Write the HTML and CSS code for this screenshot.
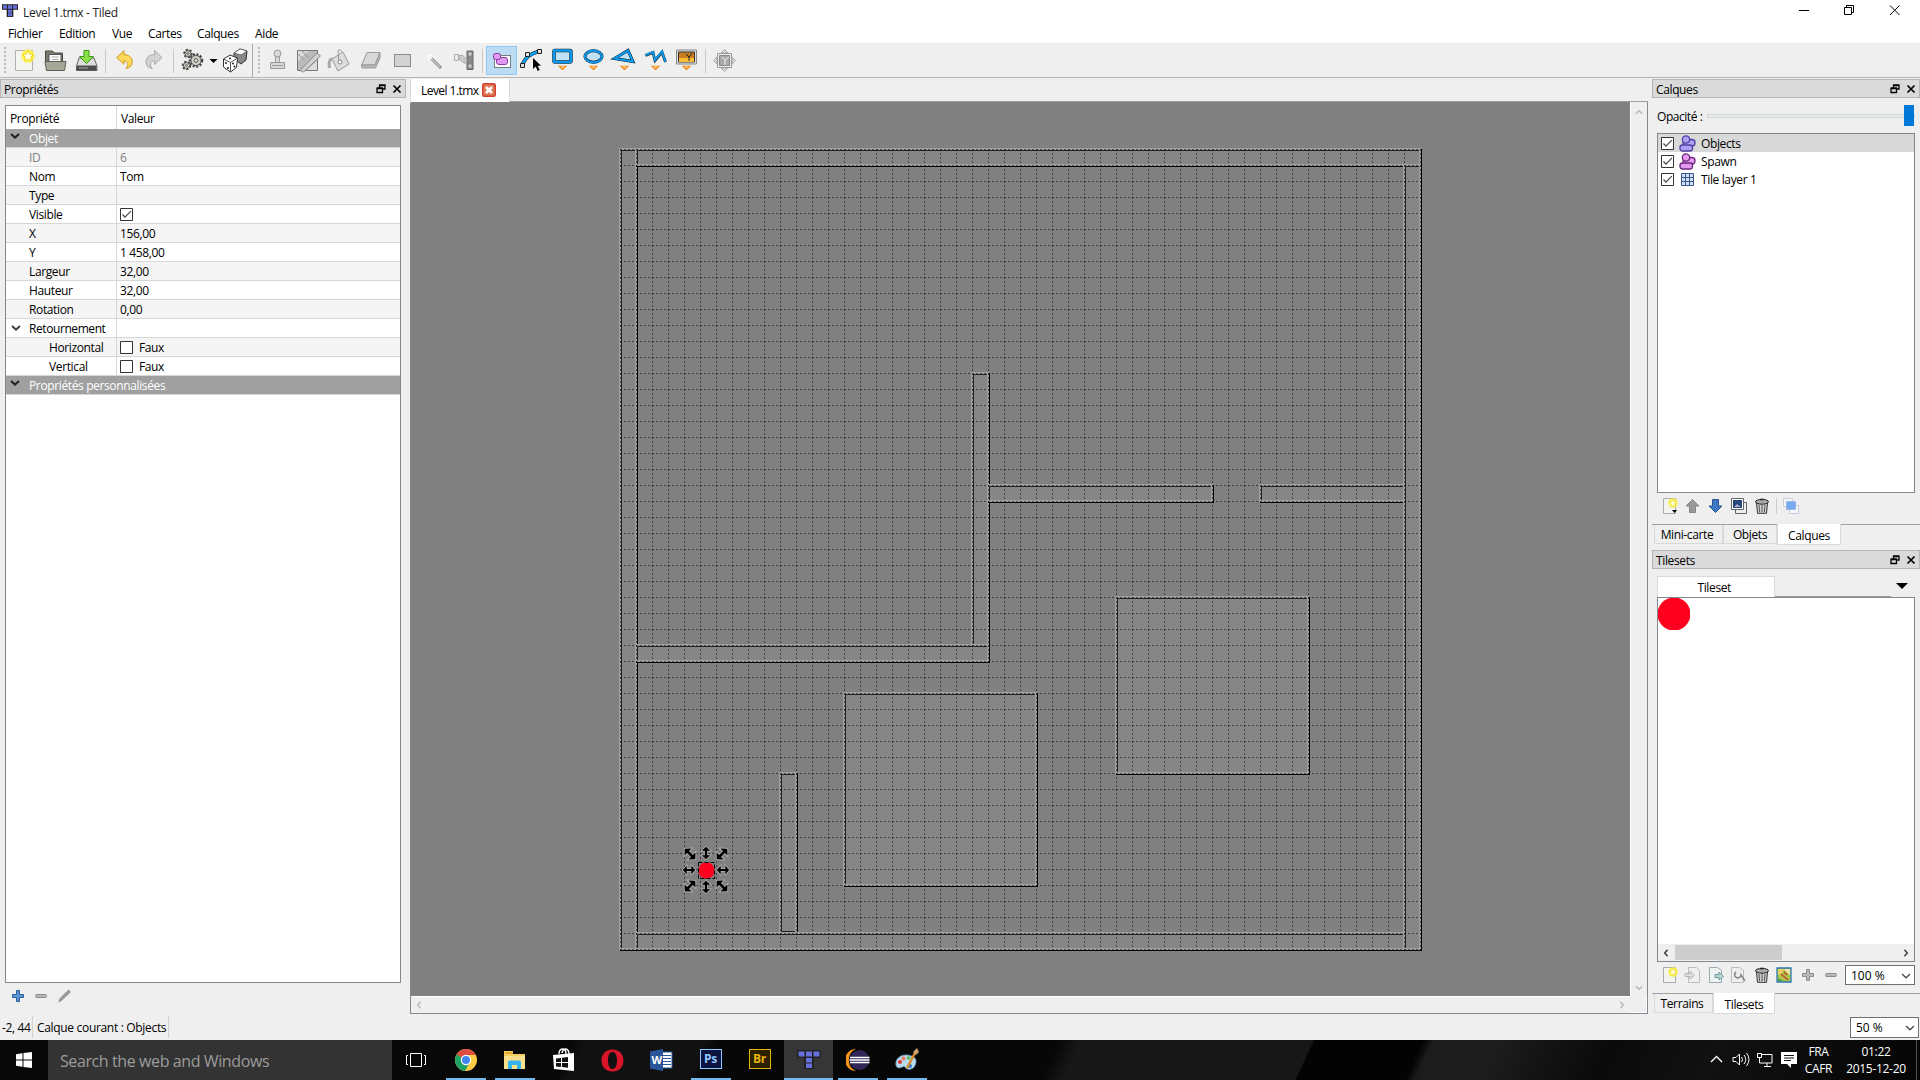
FILE: index.html
```html
<!DOCTYPE html>
<html lang="fr">
<head>
<meta charset="utf-8">
<title>Level 1.tmx - Tiled</title>
<link rel="stylesheet" href="styles.css">
</head>
<body>
<svg width="0" height="0" class="defs" aria-hidden="true">
  <defs>
    <symbol id="float" viewBox="0 0 10 10"><path d="M3.5 5V1.5H9V5H6.5M3 1H9.5M1 4.5H6.5V8.5H1ZM.5 4H7" fill="none" stroke="#000" stroke-width="1.3"/></symbol>
    <symbol id="close" viewBox="0 0 10 10"><path d="M1.5 1.5L8.5 8.5M8.5 1.5L1.5 8.5" stroke="#000" stroke-width="1.7"/></symbol>
    <symbol id="tick" viewBox="0 0 13 13"><path d="M.5.5h12v12H.5z" fill="#fff" stroke="#333"/><path d="M2.5 6.5L5 9.2L10.8 3.2" fill="none" stroke="#444" stroke-width="1.2"/></symbol>
    <symbol id="box" viewBox="0 0 13 13"><path d="M.5.5h12v12H.5z" fill="#fff" stroke="#333"/></symbol>
    <symbol id="chev" viewBox="0 0 10 6"><path d="M1 1L5 4.6L9 1" fill="none" stroke="currentColor" stroke-width="2"/></symbol>
    <symbol id="chevthin" viewBox="0 0 10 6"><path d="M1 1L5 4.8L9 1" fill="none" stroke="#444" stroke-width="1.2"/></symbol>
    <symbol id="tiled" viewBox="0 0 24 20"><path d="M0 0h24v8h-7v11H7V8H0z" fill="#222"/><path d="M1.5 1.5h6v5h-6zM9 1.5h6v5H9zM16.5 1.5h6v5h-6zM9 8h6v4.500H9zM9 13.500h6V18H9z" fill="#6670dc"/></symbol>
    <symbol id="blobs" viewBox="0 0 17 17"><g fill="currentColor" stroke="var(--edge)" stroke-width="1.3"><rect x="4" y="4.500" width="12" height="6.500" rx="3"/><rect x="1" y="10" width="12.500" height="6" rx="2.500"/><circle cx="7" cy="4.500" r="3.700"/></g></symbol>
    <symbol id="star" viewBox="0 0 12 12"><circle cx="6" cy="6" r="5.800" fill="#fff23a" opacity=".8"/><path d="M6 1.500L7.500 4.300L10.500 4.800L8.400 7L8.800 10.200L6 8.900L3.200 10.200L3.600 7L1.500 4.800L4.500 4.300Z" fill="#fffde0" stroke="#e8d400" stroke-width=".7"/></symbol>
    <symbol id="new" viewBox="0 0 16 16"><path d="M1.500.5h12v15h-12z" fill="#f3f3ef" stroke="#aaa"/><use href="#star" x="6" y="0" width="10" height="10"/></symbol>
    <symbol id="trash" viewBox="0 0 16 16"><path d="M2.500 5h11L12.500 15.300h-9z" fill="#d0d0d0" stroke="#333"/><path d="M5 7l.6 7M8 7v7M11 7l-.6 7" stroke="#555"/><ellipse cx="8" cy="3.800" rx="6.500" ry="2.400" fill="#aaa" stroke="#222"/><path d="M6 1.500h4" stroke="#222" stroke-width="1.500"/></symbol>
    <symbol id="drop" viewBox="0 0 10 5"><path d="M0 0H10L5 5Z" fill="#f28a1e"/><path d="M3 1H7L5 3Z" fill="#ffe0a0"/></symbol>
    <symbol id="plus" viewBox="0 0 12 12"><path d="M4.500.5h3v4h4v3h-4v4h-3v-4h-4v-3h4z" fill="currentColor" stroke="var(--edge)"/></symbol>
    <symbol id="minus" viewBox="0 0 12 12"><rect x=".5" y="4.500" width="11" height="3" rx="1" fill="#b8b8b8" stroke="#8e8e8e"/></symbol>
    <symbol id="resize" viewBox="-7 -7 14 14"><path d="M-6.200 0L-2.300 -4.200V-1.100H2.300V-4.200L6.200 0L2.300 4.200V1.100H-2.300V4.200Z" fill="#000" stroke="#b4b4b4" stroke-width="1.400" paint-order="stroke"/></symbol>
    <pattern id="gridH" x="620" y="149" width="4" height="16" patternUnits="userSpaceOnUse"><path d="M0 0h2v1H0z" fill="#000" fill-opacity=".5"/></pattern>
    <pattern id="gridV" x="620" y="149" width="16" height="4" patternUnits="userSpaceOnUse"><path d="M0 0h1v2H0z" fill="#000" fill-opacity=".5"/></pattern>
  </defs>
</svg>

<div class="app">
  <header class="titlebar">
    <svg class="logo" width="16" height="14"><use href="#tiled"/></svg>
    <span class="title">Level 1.tmx - Tiled</span>
    <svg class="winbtns" width="120" height="20" fill="none" stroke="#000"><path d="M2 10.500h10M47.500 7.500h7v7h-7zM49.500 7V5.500h7v7H55M93 5.500l9.500 9.500M102.500 5.500L93 15"/></svg>
  </header>
  <nav class="menubar"><span class="m1">Fichier</span><span class="m2">Edition</span><span class="m3">Vue</span><span class="m4">Cartes</span><span class="m5">Calques</span><span class="m6">Aide</span></nav>

  <div class="toolbar">
    <i class="grip"></i>
    <svg class="t31" viewBox="0 0 31 31"><path d="M6.500 5.500h17v20h-17z" fill="#f4f4f0" stroke="#b2b2a8"/><use href="#star" x="12" y="4" width="14" height="14"/></svg>
    <svg class="t32 pull" viewBox="0 0 31 31"><path d="M6 20V6h7l2 2h8v12z" fill="#777b70" stroke="#4a4d45"/><path d="M9.500 9.500h12V19h-12z" fill="#fff" stroke="#555"/><path d="M12 12h7M12 14.500h7" stroke="#aaa"/><path d="M5.500 16.500h21l-1.500 9h-18z" fill="#a4a896" stroke="#5d6155"/></svg>
    <svg class="t31" viewBox="0 0 31 31"><path d="M8 13h15l3 8v4.500H5.500V21z" fill="#ddd" stroke="#666"/><path d="M5.500 20.500h20v5h-20z" fill="#4b4e4d"/><path d="M8 23h9" stroke="#aaa"/><path d="M13 5.500h5v6h4.500L15.500 18.500L8.500 11.500H13z" fill="#8be04a" stroke="#3d9a13"/></svg>
    <i class="sep s1"></i>
    <svg class="t30" viewBox="0 0 31 31"><path d="M7 12.500L14.500 5.500V9.500C21 9.500 24 14 22.500 19.500C21.800 22 19 23.500 16.500 23.500C20 20.500 18.500 16 14.500 15.500V19.500Z" fill="#ffd95a" stroke="#c99310"/></svg>
    <svg class="t28" viewBox="0 0 28 31"><path d="M22 12.500L14.500 5.500V9.500C8 9.500 5 14 6.500 19.500C7.200 22 10 23.500 12.500 23.500C9 20.500 10.500 16 14.500 15.500V19.500Z" fill="#d2d2d2" stroke="#aaa"/></svg>
    <i class="sep s2"></i>
    <svg class="t31" viewBox="0 0 31 31" fill="#d4d4cd" stroke="#444"><g stroke-dasharray="2 1.500" stroke-width="2.500"><circle cx="20" cy="15.500" r="6"/><circle cx="12" cy="8.500" r="3.500"/><circle cx="10.500" cy="20.500" r="3.500"/></g><g stroke-width=".8"><circle cx="20" cy="15.500" r="5"/><circle cx="20" cy="15.500" r="2"/><circle cx="12" cy="8.500" r="3"/><circle cx="12" cy="8.500" r="1"/><circle cx="10.500" cy="20.500" r="3"/><circle cx="10.500" cy="20.500" r="1"/></g></svg>
    <svg class="t12" viewBox="0 0 12 31"><path d="M2.500 14h8l-4 4z"/></svg>
    <svg class="t32" viewBox="0 0 32 31"><path d="M15 8L21 4L28 6L27 15L22 19L15 14Z" fill="#888" stroke="#333"/><path d="M15 8L21 4L28 6L22 10Z" fill="#fff" stroke="#555" stroke-width=".7"/><path d="M4.500 14L11 10L18.500 13L17.500 22.500L11.500 27L4.500 22Z" fill="#fff" stroke="#333"/><path d="M4.500 14L11.500 17.500L18.500 13M11.500 17.500V27" fill="none" stroke="#555"/><g fill="#222"><circle cx="7" cy="18" r="1"/><circle cx="9" cy="23" r="1"/><circle cx="14" cy="18.500" r="1"/><circle cx="15.500" cy="21.500" r="1"/><circle cx="11" cy="13.500" r="1"/></g></svg>
    <i class="sep s3"></i><i class="grip g2"></i>
    <svg class="t31" viewBox="0 0 31 31"><g fill="#d8d8d8" stroke="#999"><path d="M8.500 17.500h14v6h-14zM13.500 11h4v6.500h-4z"/><circle cx="15.500" cy="8.500" r="3.500"/></g><path d="M10 20.500h11" stroke="#999"/></svg>
    <svg class="t31" viewBox="0 0 31 31"><path d="M4.500 5.500h20v20h-20z" fill="#bbb" stroke="#777"/><path d="M5 6h10L5 16zM24 16v9H14z" fill="#ddd"/><path d="M5 9L12 16M9 6L16 13" stroke="#aaa" stroke-width="1.500"/><path d="M7 25.500L24 8L27.500 11L10.500 27z" fill="#d2d2d2" stroke="#888"/></svg>
    <svg class="t31" viewBox="0 0 31 31"><path d="M8 14L19 7L25 19L14 26Z" fill="#ddd" stroke="#999"/><path d="M15 17L14 6Q16 3 18 7" fill="none" stroke="#999"/><circle cx="16" cy="17" r="2" fill="#fff" stroke="#888"/><path d="M9 14Q4 13 5.500 23" fill="none" stroke="#aaa" stroke-width="3"/></svg>
    <svg class="t31" viewBox="0 0 31 31"><path d="M12 7.500h13L20 20H6.500z" fill="#d8d8d8" stroke="#999" stroke-linejoin="round"/><path d="M6.500 20H20L25 8v5L20.500 23H7z" fill="#b8b8b8" stroke="#999" stroke-linejoin="round"/></svg>
    <svg class="t32" viewBox="0 0 32 31"><path d="M8.500 9.500h16v12h-16z" fill="#d2d2d2" stroke="#333" stroke-dasharray="1 1"/></svg>
    <svg class="t31 wand" viewBox="0 0 31 31"><path d="M11 12L22 23" stroke="#888" stroke-width="3"/><path d="M11 12L21 22" stroke="#ccc" stroke-width="1.200"/><circle cx="11" cy="12" r="2.500" fill="#fff" opacity=".8"/></svg>
    <svg class="t31" viewBox="0 0 31 31"><path d="M17 6h6v18.500h-6z" fill="#888" stroke="#666"/><path d="M18.500 7.500h3v3h-3zM18.500 19.500h3v3h-3z" fill="#ccc"/><path d="M4.500 9.500h4v6h-4z" fill="#eee" stroke="#aaa"/><path d="M9 10.500h4l4 5l-2 3L9 14z" fill="#ccc" stroke="#aaa"/></svg>
    <i class="sep s4"></i>
    <span class="active"><svg class="t31" viewBox="0 0 31 31"><path d="M8.500 10.500h16v12h-16z" fill="#fff" stroke="#111" stroke-dasharray="1 1"/><g fill="#e09af0" stroke="#8a3aa5"><rect x="10.500" y="12.500" width="11" height="7" rx="2.500"/><rect x="7.500" y="8.500" width="7" height="6" rx="2"/></g></svg></span>
    <svg class="t30" viewBox="0 0 30 31"><path d="M5.500 20Q8 10 23 6" fill="none" stroke="#111" stroke-width="3.500"/><path d="M5.500 20Q8 10 23 6" fill="none" stroke="#109df0" stroke-width="2.500"/><path d="M3.500 18.500h4v4h-4zM8.500 7.500h4v4h-4zM20.500 4.500h4v4h-4z" fill="#ddd" stroke="#222"/><path d="M16 13v11l2.700-2.400l2 4.400l2-1l-2-4.200H24z"/></svg>
    <svg class="t31" viewBox="0 0 31 31"><rect x="7" y="5.500" width="17" height="11.500" rx="1" fill="#bfe2f5" stroke="#222" stroke-width="3.500"/><rect x="7" y="5.500" width="17" height="11.500" rx="1" fill="none" stroke="#0a9af2" stroke-width="2.600"/><use href="#drop" x="10.500" y="20.500" width="10" height="5"/></svg>
    <svg class="t31" viewBox="0 0 31 31"><ellipse cx="15.500" cy="11.500" rx="8.500" ry="5.800" fill="#bfe2f5" stroke="#111" stroke-width="3"/><ellipse cx="15.500" cy="11.500" rx="8.500" ry="5.800" fill="none" stroke="#0a9af2" stroke-width="2.200"/><use href="#drop" x="10.500" y="20.500" width="10" height="5"/></svg>
    <svg class="t31" viewBox="0 0 31 31"><path d="M5.500 13.500L19 5.500L24 16.500Z" fill="#bfe2f5" stroke="#111" stroke-width="3"/><path d="M5.500 13.500L19 5.500L24 16.500Z" fill="none" stroke="#0a9af2" stroke-width="2.200"/><use href="#drop" x="10.500" y="20.500" width="10" height="5"/></svg>
    <svg class="t31" viewBox="0 0 31 31"><path d="M5.500 10.500L13 7.500L15 15.500L22 7L25.500 17" fill="none" stroke="#222" stroke-width="2.800"/><path d="M5.500 10L13 7L15 15L22 6.500L25.500 17" fill="none" stroke="#0a9af2" stroke-width="2"/><use href="#drop" x="10.500" y="20.500" width="10" height="5"/></svg>
    <svg class="t32" viewBox="0 0 32 31"><path d="M5.500 5h20v14h-20z" fill="#ddd" stroke="#888"/><path d="M7.500 7h16v10h-16z" fill="#c67e20" stroke="#333"/><path d="M8 13h15v4H8z" fill="#f8bd35"/><path d="M18 16V12L15 9M18 12L21 8" stroke="#222" fill="none"/><use href="#drop" x="10.500" y="20.500" width="10" height="5"/></svg>
    <i class="sep s5"></i>
    <svg class="t31" viewBox="0 0 31 31"><path d="M15.500 4.500L19 8h-7zM15.500 26.500L19 23h-7zM4.500 15.500L8 12v7zM26.500 15.500L23 12v7z" fill="#ddd" stroke="#aaa"/><path d="M8.500 8.500h14v14h-14z" fill="#eee" stroke="#999"/><path d="M10.500 10.500h10v10h-10z" fill="#aaa" stroke="#888"/><path d="M16 20v-5l-3-3M16 15l4-3" stroke="#eee" fill="none"/></svg>
  </div>

  <main class="work">
    <aside class="left">
      <div class="dockhead"><span>Propriétés</span><svg width="10" height="10"><use href="#float"/></svg><svg width="10" height="10"><use href="#close"/></svg></div>
      <div class="props">
        <div class="row head"><b>Propriété</b><em>Valeur</em></div>
        <div class="row group"><svg width="10" height="6"><use href="#chev"/></svg><b>Objet</b></div>
        <div class="row alt dim"><b>ID</b><em>6</em></div>
        <div class="row"><b>Nom</b><em>Tom</em></div>
        <div class="row alt"><b>Type</b><em></em></div>
        <div class="row"><b>Visible</b><em><svg width="13" height="13"><use href="#tick"/></svg></em></div>
        <div class="row alt"><b>X</b><em>156,00</em></div>
        <div class="row"><b>Y</b><em>1 458,00</em></div>
        <div class="row alt"><b>Largeur</b><em>32,00</em></div>
        <div class="row"><b>Hauteur</b><em>32,00</em></div>
        <div class="row alt"><b>Rotation</b><em>0,00</em></div>
        <div class="row open"><b><svg width="10" height="6"><use href="#chev"/></svg>Retournement</b><em></em></div>
        <div class="row alt sub"><b>Horizontal</b><em><svg width="13" height="13"><use href="#box"/></svg>Faux</em></div>
        <div class="row sub"><b>Vertical</b><em><svg width="13" height="13"><use href="#box"/></svg>Faux</em></div>
        <div class="row group"><svg width="10" height="6"><use href="#chev"/></svg><b>Propriétés personnalisées</b></div>
      </div>
      <div class="propbtns">
        <svg class="blue" width="12" height="12"><use href="#plus"/></svg><svg width="12" height="12"><use href="#minus"/></svg><svg width="14" height="14"><path d="M0 13.500L1.500 9.500L10.500 .5L13 3L3.500 12z" fill="#999"/></svg>
      </div>
    </aside>

    <section class="editor">
      <div class="doctabs"><div class="doctab"><span>Level 1.tmx</span><svg width="14" height="14"><rect x=".75" y=".75" width="12.500" height="12.500" rx="1.500" fill="#e07b58" stroke="#d2412e" stroke-width="1.500"/><path d="M4 4L10 10M10 4L4 10" stroke="#fff" stroke-width="2.500"/></svg></div></div>
      <div class="view">
        <svg class="map" viewBox="411 102 1219 894" width="1219" height="894">
          <g class="walls" shape-rendering="crispEdges">
            <g><path class="sh" d="M621 150h16v800h-16z"/><path class="ob" d="M620 149h16v800h-16z"/></g>
            <g><path class="sh" d="M637 150h784v16h-784z"/><path class="ob" d="M636 149h784v16h-784z"/></g>
            <g><path class="sh" d="M973 374h16v272h-16z"/><path class="ob" d="M972 373h16v272h-16z"/></g>
            <g><path class="sh" d="M637 646h352v16h-352z"/><path class="ob" d="M636 645h352v16h-352z"/></g>
            <g><path class="sh" d="M989 486h224v16h-224z"/><path class="ob" d="M988 485h224v16h-224z"/></g>
            <g><path class="sh" d="M1261 486h144v16h-144z"/><path class="ob" d="M1260 485h144v16h-144z"/></g>
            <g><path class="sh" d="M1117 598h192v176h-192z"/><path class="ob" d="M1116 597h192v176h-192z"/></g>
            <g><path class="sh" d="M845 694h192v192h-192z"/><path class="ob" d="M844 693h192v192h-192z"/></g>
            <g><path class="sh" d="M781 774h16v158h-16z"/><path class="ob" d="M780 773h16v160h-16z"/></g>
            <g><path class="sh" d="M637 934h768v16h-768z"/><path class="ob" d="M636 933h768v16h-768z"/></g>
            <g><path class="sh" d="M1405 166h16v784h-16z"/><path class="ob" d="M1404 165h16v784h-16z"/></g>
          </g>
          <g shape-rendering="crispEdges"><path d="M620 149h801v801h-801z" fill="url(#gridH)"/><path d="M620 149h801v801h-801z" fill="url(#gridV)"/></g>
          <circle cx="706.500" cy="870.500" r="8.200" fill="#ff001e"/>
          <path d="M698.500 862.500h16v16h-16z" fill="none" stroke="#000" stroke-dasharray="4 2"/>
          <g>
            <use href="#resize" x="-7" y="-7" width="14" height="14" transform="translate(689 870)"/>
            <use href="#resize" x="-7" y="-7" width="14" height="14" transform="translate(723 870)"/>
            <use href="#resize" x="-7" y="-7" width="14" height="14" transform="translate(706 853) rotate(90)"/>
            <use href="#resize" x="-7" y="-7" width="14" height="14" transform="translate(706 887) rotate(90)"/>
            <use href="#resize" x="-7" y="-7" width="14" height="14" transform="translate(690 854) rotate(45) scale(1.2)"/>
            <use href="#resize" x="-7" y="-7" width="14" height="14" transform="translate(722 886) rotate(45) scale(1.2)"/>
            <use href="#resize" x="-7" y="-7" width="14" height="14" transform="translate(722 854) rotate(-45) scale(1.2)"/>
            <use href="#resize" x="-7" y="-7" width="14" height="14" transform="translate(690 886) rotate(-45) scale(1.2)"/>
          </g>
        </svg>
        <div class="vscroll"><svg class="up" width="8" height="6" viewBox="0 0 10 6"><use href="#chev"/></svg><svg width="8" height="6" viewBox="0 0 10 6"><use href="#chev"/></svg></div>
        <div class="hscroll"><svg class="lf" width="8" height="6" viewBox="0 0 10 6"><use href="#chev"/></svg><svg class="rt" width="8" height="6" viewBox="0 0 10 6"><use href="#chev"/></svg></div>
        <div class="corner"></div>
      </div>
    </section>

    <aside class="right">
      <div class="dockhead"><span>Calques</span><svg width="10" height="10"><use href="#float"/></svg><svg width="10" height="10"><use href="#close"/></svg></div>
      <div class="opacity"><span>Opacité :</span><div class="groove"><i></i></div></div>
      <div class="layers">
        <div class="layer sel"><svg width="13" height="13"><use href="#tick"/></svg><svg class="violet" width="17" height="17"><use href="#blobs"/></svg><span>Objects</span></div>
        <div class="layer"><svg width="13" height="13"><use href="#tick"/></svg><svg class="pink" width="17" height="17"><use href="#blobs"/></svg><span>Spawn</span></div>
        <div class="layer"><svg width="13" height="13"><use href="#tick"/></svg><svg width="17" height="17"><path d="M2.500 2.500h12v12h-12zM6.500 2v13M10.500 2v13M2 6.500h13M2 10.500h13" fill="#cfe0fa" stroke="#3f5486"/></svg><span>Tile layer 1</span></div>
      </div>
      <div class="iconrow layerbtns">
        <svg width="23" height="18" viewBox="0 0 23 18"><use href="#new" x="3" y="1" width="16" height="16"/><path d="M13 13h5l-2.500 3z"/></svg>
        <svg width="23" height="18" viewBox="0 0 23 18"><path d="M10.500 2.500L17 9h-3.500v6.500h-6V9H4z" fill="#999" stroke="#888"/></svg>
        <svg width="23" height="18" viewBox="0 0 23 18"><path d="M10.500 15.500L17 9h-3.500V2.500h-6V9H4z" fill="#4078c8" stroke="#2c538f"/></svg>
        <svg width="23" height="18" viewBox="0 0 23 18"><path d="M7.500 5.500h11v11h-11z" fill="#eee" stroke="#666"/><path d="M3.500 1.500h12v11h-12z" fill="#fff" stroke="#666"/><path d="M5 3h9v8H5z" fill="#27477a"/><path d="M6 10l3-3l4 3z" fill="#aac"/></svg>
        <svg width="23" height="18" viewBox="0 0 23 18"><use href="#trash" x="3" y="1" width="16" height="16"/></svg>
        <i class="minisep"></i>
        <svg width="23" height="18" viewBox="0 0 23 18"><path d="M2.500 1.500h9v8h-9zM8.500 8.500h9v8h-9z" fill="#f4f6fa" stroke="#ccd"/><path d="M5.500 4.500h9v8h-9z" fill="#78a8f0" stroke="#9ab8e8"/></svg>
      </div>
      <div class="tabs tabs1"><span class="w69">Mini-carte</span><span class="w54">Objets</span><span class="w64 cur">Calques</span></div>
      <div class="dockhead second"><span>Tilesets</span><svg width="10" height="10"><use href="#float"/></svg><svg width="10" height="10"><use href="#close"/></svg></div>
      <div class="tiletabs"><span>Tileset</span><i></i><svg width="12" height="6"><path d="M0 0h12L6 6z"/></svg></div>
      <div class="tiles">
        <svg width="32" height="32"><circle cx="16" cy="16" r="16.500" fill="#ff001e"/></svg>
        <div class="tilescroll"><svg class="lf" width="8" height="6" viewBox="0 0 10 6"><use href="#chev"/></svg><i></i><svg class="rt" width="8" height="6" viewBox="0 0 10 6"><use href="#chev"/></svg></div>
      </div>
      <div class="iconrow tilebtns">
        <svg width="23" height="18" viewBox="0 0 23 18"><use href="#new" x="3" y="1" width="16" height="16"/></svg>
        <svg width="23" height="18" viewBox="0 0 23 18"><path d="M6.500 1.500h8l3 3v12h-11z" fill="#f0f0f0" stroke="#bbb"/><path d="M3 7.500h5V5l4.500 4.500L8 13v-2.500H3z" fill="#ddd" stroke="#aaa" stroke-width=".8"/></svg>
        <svg width="23" height="18" viewBox="0 0 23 18"><path d="M4.500 1.500h8l4 3v12h-12z" fill="#eef3f3" stroke="#9aa9ab"/><path d="M10 8.500h4V6l4.500 4.500L14 14v-2.500h-4z" fill="#b8d8d8" stroke="#5b8888" stroke-width=".8"/></svg>
        <svg width="23" height="18" viewBox="0 0 23 18"><path d="M3.500 1.500h8l4 3v12h-12z" fill="#eee" stroke="#bbb"/><path d="M8 6a3.200 3.200 0 1 0 5 3l4 6" fill="none" stroke="#888" stroke-width="1.600"/></svg>
        <svg width="23" height="18" viewBox="0 0 23 18"><use href="#trash" x="3" y="1" width="16" height="16"/></svg>
        <svg width="23" height="18" viewBox="0 0 23 18"><path d="M3 2h14v14H3z" fill="#a8c44a" stroke="#2a78b8" stroke-width="1.300"/><path d="M4 3h6l-2 4l-4 2z" fill="#f0d060"/><path d="M10 3h6v6z" fill="#f8e8b0"/><path d="M7 8l7 6M10 6l3 3" stroke="#d0402a" stroke-width="1.300"/><path d="M4 12l5 3H4z" fill="#48a040"/></svg>
        <svg class="grey" width="23" height="18" viewBox="0 0 23 18"><use href="#plus" x="5" y="3" width="12" height="12"/></svg>
        <svg width="23" height="18" viewBox="0 0 23 18"><use href="#minus" x="5" y="3" width="12" height="12"/></svg>
        <div class="combo zoom1"><span>100 %</span><svg width="10" height="6"><use href="#chevthin"/></svg></div>
      </div>
      <div class="tabs tabs2"><span class="w59">Terrains</span><span class="w62 cur">Tilesets</span></div>
    </aside>
  </main>

  <footer class="status"><span class="coord">-2, 44</span><span class="curlayer">Calque courant : Objects</span><div class="combo zoom2"><span>50 %</span><svg width="10" height="6"><use href="#chevthin"/></svg></div></footer>

  <div class="taskbar">
    <div class="start"><svg width="16" height="16" fill="#fff"><path d="M0 2.200L6.500 1.300V7.500H0zM7.500 1.100L16 0V7.500H7.500zM0 8.500H6.500V14.700L0 13.800zM7.500 8.500H16V16L7.500 14.900z"/></svg></div>
    <div class="search">Search the web and Windows</div>
    <div class="task"><svg width="22" height="16" fill="none" stroke="#fff"><path d="M4.500 1.500h11v13h-11zM2 3.500H.5v9H2M18 3.500h1.500v9H18"/></svg></div>
    <div class="task run"><svg width="22" height="22"><circle cx="11" cy="11" r="11" fill="#fc4"/><path d="M11 11L1.500 5.500A11 11 0 0 1 20.500 5.500L20.700 6H11z" fill="#de4b40"/><path d="M11 11L1.500 5.500A11 11 0 0 0 10 22L15 13z" fill="#1ea362"/><circle cx="11" cy="11" r="5.200" fill="#fff"/><circle cx="11" cy="11" r="4" fill="#4286f4"/></svg></div>
    <div class="task run"><svg width="22" height="20"><path d="M0 1h9v3h12v15H0z" fill="#f5ce62"/><path d="M1 2h8v2H1z" fill="#e5a92f"/><path d="M0 6h21v13H0z" fill="#fce18c"/><path d="M4 19v-7q0-1.500 1.500-1.500h10Q17 10.500 17 12v7h-4v-4H8v4z" fill="#35b5ee"/></svg></div>
    <div class="task"><svg width="22" height="24"><path d="M6 6Q6 1 10 1Q13 1 13 6M9 5Q10 1 13 1Q16 2 16 6" fill="none" stroke="#fff" stroke-width="1.400"/><path d="M0 7L21 5V23L1 21z" fill="#fff"/><path d="M3 10.500L8 10V14H3zM9 9.800L15 9v5H9zM3 15h5v4L3 18.500zM9 15h6v4.800L9 19z" fill="#111"/></svg></div>
    <div class="task"><svg width="23" height="23"><path fill-rule="evenodd" d="M11.500.5C4 .5.500 6 .500 11.500S4 22.500 11.500 22.500S22.500 17 22.500 11.500S19 .5 11.500.5M11.500 3C15 3 16 7.500 16 11.500S15 20 11.500 20S7 15.500 7 11.500S8 3 11.500 3" fill="#d9152b"/></svg></div>
    <div class="task"><svg width="23" height="22"><path d="M11 3h11v16H11z" fill="#fff" stroke="#2b579a"/><path d="M13 6.500h8M13 9.500h8M13 12.500h8M13 15.500h8" stroke="#2b579a"/><path d="M0 2.500L13 0v22L0 19.500z" fill="#2b579a"/><text x="1.500" y="15" class="wtxt">W</text></svg></div>
    <div class="task run"><div class="adobe ps">Ps</div></div>
    <div class="task"><div class="adobe br">Br</div></div>
    <div class="task run on"><svg width="24" height="20"><use href="#tiled"/></svg></div>
    <div class="task run"><svg width="24" height="22"><path d="M10 0A11 11 0 0 0 10 22A12 12 0 0 1 10 0" fill="#f7941e"/><circle cx="13.500" cy="11" r="10" fill="#322659"/><path d="M4 8.500h19.500M3.500 11h20M4 13.500h19.500" stroke="#fff" stroke-width="1.300"/></svg></div>
    <div class="task run"><svg width="24" height="24"><path d="M1 17C0 9 9 5 16 8C22 10 22 14 19 19C15 23 11 21 9 18C6 20 2 21 1 17" fill="#b8dcf0" stroke="#7aa8c8"/><circle cx="5" cy="14" r="2" fill="#d33"/><circle cx="8.500" cy="10.500" r="2" fill="#e76"/><circle cx="13.500" cy="10" r="1.800" fill="#5b5"/><circle cx="15" cy="18" r="2" fill="#37c"/><path d="M12 20L20 5" stroke="#d98a30" stroke-width="2.500"/><path d="M18 4L22 0L24 4L21 7z" fill="#c9a070"/></svg></div>
    <div class="tray">
      <svg width="98" height="24" fill="none" stroke="#fff"><path d="M1 14L6.500 8.500L12 14" stroke-width="1.400"/><path d="M23 9.500h3l3.500-3.500v11L26 13.500h-3zM31.500 9q2 2.500 0 5M34 7q3.500 4.500 0 9M36.500 5q5 6.500 0 13"/><path d="M51.500 6.500h10.500v8.500H49.500v-4.500M54 18.500h7M57 15v3M47.500 5.500h4v4h-4zM49.500 9.500v2"/><path d="M71 4h16v12h-6v4l-4-4h-6z" fill="#fff" stroke="none"/><path d="M74 7.500h10M74 10h10M74 12.500h7" stroke="#111"/></svg>
      <div class="lang"><span>FRA</span><span>CAFR</span></div>
      <div class="clock"><span>01:22</span><span>2015-12-20</span></div>
      <i class="peek"></i>
    </div>
  </div>
</div>
</body>
</html>
```
FILE: styles.css
```css
* { box-sizing: border-box; }
body { margin: 0; background: #efefef; font: 12px/16px "Open Sans", "Noto Sans", sans-serif; letter-spacing: -.37px; color: #000; overflow: hidden; }
svg { display: block; flex: none; }
.defs { position: absolute; }
i, em, b { font-style: normal; font-weight: normal; }
span { white-space: nowrap; }
.app { width: 1920px; height: 1080px; display: flex; flex-direction: column; }

.titlebar { height: 23px; background: #fff; display: flex; align-items: center; padding: 1px 3px 0 2px; color: #222; letter-spacing: -.3px; }
.logo { margin-right: 5px; margin-top: -3px; }
.title { flex: 1; padding-top: 1px; }
.winbtns { margin-top: -4px; }
.menubar { height: 21px; background: #fff; border-bottom: 1px solid #ececec; display: flex; align-items: center; padding: 2px 0 0 8px; }
.m1 { width: 51px; }
.m2 { width: 53px; }
.m3 { width: 36px; }
.m4 { width: 49px; }
.m5 { width: 58px; }

.toolbar { height: 34px; display: flex; align-items: center; border-bottom: 1px solid #b4b4b4; background: #efefef; }
.grip { width: 2px; height: 27px; margin: 0 3px 0 4px; background: repeating-linear-gradient(#bbb 0 2px, #efefef 2px 4px); }
.g2 { margin: 0 2px 0 2px; }
.t31 { width: 31px; height: 31px; }
.t32 { width: 32px; height: 31px; }
.t30 { width: 30px; height: 31px; }
.t28 { width: 28px; height: 31px; }
.t12 { width: 12px; height: 31px; }
.pull { margin-left: -1px; }
.sep { width: 1px; height: 24px; background: #c8c8c8; }
.s1 { margin: 0 4px 0 3px; }
.s2 { margin: 0 2px 0 5px; }
.s3 { height: 33px; margin: 0 3px 0 1px; background: #aaa; }
.wand { margin-left: 1px; }
.s4 { margin: 0 3px 0 1px; }
.s5 { margin: 0 3px 0 2px; }
.active { height: 29px; display: flex; align-items: center; overflow: hidden; background: #bcdcf4; box-shadow: inset 0 0 0 1px #90c8f6; }

.work { height: 936px; display: flex; }
.left { width: 410px; padding-top: 1px; }
.dockhead { height: 19px; display: flex; align-items: center; border: 1px solid #b6b6b6; background: #dadada; padding: 0 3px; gap: 6px; }
.dockhead span { flex: 1; padding-top: 3px; }
.left .dockhead { width: 406px; }
.props { margin: 7px 0 0 5px; width: 396px; height: 878px; border: 1px solid #828790; background: #fff; }
.row { height: 19px; display: flex; border-bottom: 1px solid #d6d6d6; line-height: 16px; }
.row b { width: 111px; padding: 2px 0 0 23px; border-right: 1px solid #d6d6d6; display: flex; align-items: center; white-space: nowrap; }
.row em { padding: 2px 0 0 3px; display: flex; align-items: center; gap: 6px; }
.row em svg { margin-top: -2px; }
.row.head { height: 23px; border-bottom: 0; }
.head b { padding-left: 4px; }
.head em { padding-left: 4px; }
.alt { background: #f5f5f5; }
.dim { color: #808080; }
.group { background: #a0a0a0; color: #fff; }
.group svg { margin: 4px 0 0 4px; color: #222; }
.row.group b { border: 0; width: auto; padding-left: 9px; }
.open b { padding-left: 5px; letter-spacing: -.42px; }
.open svg { margin: -3px 8px 0 0; color: #444; }
.row.sub b { padding-left: 43px; }
.propbtns { display: flex; align-items: center; gap: 11px; padding: 6px 0 0 12px; }
.blue { color: #5c94d8; --edge: #2d5c9c; }
.grey { color: #b8b8b8; --edge: #8e8e8e; }

.editor { width: 1238px; }
.doctabs { height: 24px; padding-top: 1px; display: flex; border-bottom: 1px solid #a0a0a4; }
.doctab { width: 100px; height: 24px; background: #fff; border: 1px solid #d9d9d9; border-width: 0 1px; display: flex; align-items: center; padding: 0 0 2px 10px; gap: 4px; }
.doctab span { padding-top: 2px; width: 57px; letter-spacing: -.55px; }
.view { height: 912px; border: 1px solid #828790; border-top: 0; display: grid; grid-template-columns: 1219px 17px; grid-template-rows: 894px 17px; background: #fff; }
.map { background: #808080; height: 894px; }
.ob { fill: #a0a0a4; fill-opacity: .2; stroke: #a0a0a4; stroke-width: 2; }
.sh { fill: none; stroke: #000; stroke-width: 2; }
.vscroll, .hscroll, .corner { background: #efefef; border: 1px solid #fff; border-width: 0 0 0 1px; color: #bbb; }
.vscroll { display: flex; flex-direction: column; justify-content: space-between; align-items: center; padding: 7px 0 5px; }
.hscroll { border-width: 1px 0 0; display: flex; justify-content: space-between; align-items: center; padding: 0 4px; }
.corner { border-width: 0 1px 1px 0; }
.up { transform: rotate(180deg); }
.lf { transform: rotate(90deg); }
.rt { transform: rotate(-90deg); }

.right { width: 268px; margin-left: 4px; padding-top: 1px; display: flex; flex-direction: column; }
.opacity { height: 35px; display: flex; align-items: center; padding: 3px 5px 0 5px; gap: 6px; }
.opacity span { width: 44px; letter-spacing: -.45px; }
.groove { flex: 1; height: 4px; margin-top: -3px; border: 1px solid #d4d8d8; background: #e7eaea; display: flex; align-items: center; justify-content: flex-end; }
.groove i { width: 10px; height: 21px; background: #0078d7; }
.layers { margin: 0 5px; height: 360px; border: 1px solid #828790; background: #fff; }
.layer { height: 18px; display: flex; align-items: center; padding-left: 3px; gap: 5px; }
.layer span { padding-top: 2px; }
.sel { background: #d9d9d9; }
.violet { color: #b0a0f5; --edge: #4d40a0; }
.pink { color: #e49af0; --edge: #6e2880; }
.iconrow { display: flex; align-items: center; padding-left: 7px; }
.layerbtns { height: 31px; padding-top: 0; }
.layerbtns svg { margin-top: -5px; }
.minisep { width: 1px; height: 16px; background: #ccc; margin: -5px 4px 0 2px; }
.tabs { border-top: 1px solid #a0a0a0; display: flex; align-items: flex-start; padding-left: 2px; }
.tabs span { height: 19px; border: 1px solid #d9d9d9; border-top: 0; text-align: center; line-height: 19px; padding-right: 3px; }
.tabs .cur { margin-top: -1px; height: 21px; background: #fff; line-height: 23px; padding-right: 0; }
.tabs1 { height: 26px; }
.w69 { width: 69px; }
.w54 { width: 54px; }
.w64 { width: 64px; }
.w59 { width: 59px; }
.w62 { width: 62px; }
.tabs .w54 { padding-right: 0; }
.tiletabs { height: 28px; padding: 7px 12px 0 5px; display: flex; align-items: center; }
.tiletabs span { width: 118px; height: 21px; background: #fff; border: 1px solid #d9d9d9; border-bottom: 0; text-align: center; line-height: 21px; padding-right: 3px; }
.tiletabs i { width: 117px; height: 1px; background: #a0a0a0; align-self: flex-end; }
.tiletabs svg { margin-left: 5px; margin-top: -2px; }
.tiles { margin: 0 5px; height: 365px; border: 1px solid #828790; background: #fff; display: flex; flex-direction: column; justify-content: space-between; }
.tilescroll { height: 17px; background: #efefef; display: flex; align-items: center; color: #444; padding: 0 4px; }
.tilescroll i { width: 107px; height: 15px; margin-left: 5px; margin-right: auto; background: #cdcdcd; }
.tilebtns { height: 31px; padding-bottom: 5px; }
.tilebtns .combo { margin-left: 2px; }
.combo { background: #fff; border: 1px solid #707070; display: flex; align-items: center; justify-content: space-between; padding: 1px 3px 0 5px; letter-spacing: 0; }
.zoom1 { width: 70px; height: 20px; }
.zoom2 { width: 69px; height: 21px; margin: 0 1px 0 auto; }
.status { height: 26px; display: flex; align-items: center; }
.coord, .curlayer { height: 22px; border-right: 1px solid #d2d2d2; line-height: 23px; }
.coord { width: 33px; padding-left: 2px; }
.curlayer { width: 136px; padding-left: 4px; letter-spacing: -.32px; }

.taskbar { height: 40px; display: flex; color: #fff; background: linear-gradient(115deg, #080808 0 520px, #111 530px 640px, #070707 650px 960px, #171717 980px 1190px, #030303 1192px 1290px, #1c1c1c 1300px 1360px, #0a0a0a 1460px, #111 1560px, #050505); }
.start { width: 48px; display: flex; align-items: center; justify-content: center; }
.search { width: 344px; background: #333; color: #9c9c9c; font-size: 16px; line-height: 42px; padding-left: 12px; letter-spacing: -.4px; white-space: nowrap; }
.task { width: 49px; display: flex; align-items: center; justify-content: center; background: linear-gradient(#76b9ed, #76b9ed) center bottom / 0 2px no-repeat; }
.run { background-size: 40px 2px; }
.on { background-color: #363636; background-size: 49px 2px; }
.adobe { width: 22px; height: 20px; border: 1px solid; font: bold 12px/18px "Open Sans", sans-serif; text-align: center; letter-spacing: -.3px; margin-top: -2px; }
.ps { color: #8ec8ff; background: #0c1340; }
.br { color: #e8b50c; background: #2b2000; }
.wtxt { font: bold 11px "Open Sans", sans-serif; fill: #fff; }
.tray { margin-left: auto; display: flex; align-items: center; }
.tray > svg { margin-right: -9px; }
.lang, .clock { display: flex; flex-direction: column; align-items: center; line-height: 17px; }
.lang { width: 39px; }
.clock { width: 76px; letter-spacing: -.3px; }
.peek { width: 1px; height: 40px; background: #555; margin: 0 3px 0 2px; }
```
